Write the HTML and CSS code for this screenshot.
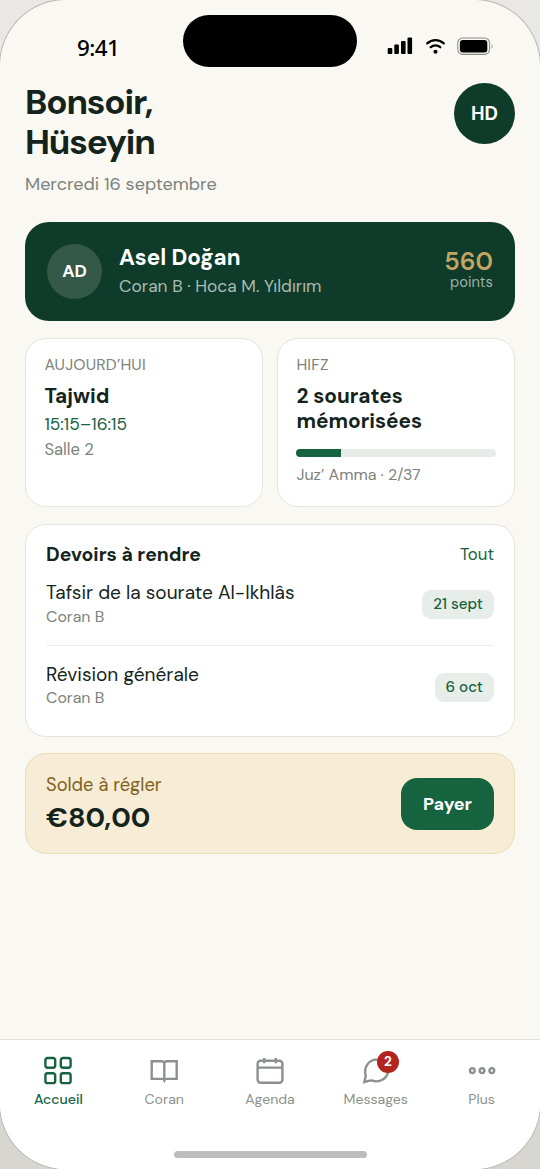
FILE: index.html
```html
<!DOCTYPE html>
<html lang="fr">
<head>
<meta charset="utf-8">
<meta name="viewport" content="width=device-width, initial-scale=1">
<title>Accueil</title>
<link rel="stylesheet" href="styles.css">
</head>
<body>
<div class="phone">
  <div class="status">
    <span class="clock">9:41</span>
    <span class="island"></span>
    <svg class="status-icons" width="108" height="20" viewBox="0 0 108 20">
      <rect x="0.7" y="11" width="4.6" height="6" rx="1"/>
      <rect x="7.3" y="7.4" width="4.6" height="9.6" rx="1"/>
      <rect x="14" y="4" width="4.6" height="13" rx="1"/>
      <rect x="20.5" y="0.4" width="4.6" height="16.6" rx="1"/>
      <g fill="none" stroke="#000" stroke-width="2.2" stroke-linecap="round">
        <path d="M40.2 6.4a12 12 0 0 1 16.6 0"/>
        <path d="M43.6 10.3a7.2 7.2 0 0 1 9.8 0"/>
      </g>
      <circle cx="48.5" cy="14.8" r="2"/>
      <rect x="70.8" y="1" width="31.7" height="16.4" rx="5" fill="none" stroke="#8f8c8c" stroke-width="1.1"/>
      <rect x="72.9" y="3.1" width="27.4" height="12.3" rx="3"/>
      <path d="M104.6 7v4.6c1.3-.8 1.3-3.8 0-4.6z" fill="#8f8c8c"/>
    </svg>
  </div>

  <main class="content">
    <header class="header">
      <div>
        <h1 class="greeting">Bonsoir,<br>Hüseyin</h1>
        <p class="date">Mercredi 16 septembre</p>
      </div>
      <div class="avatar">HD</div>
    </header>

    <section class="student">
      <div class="student-avatar">AD</div>
      <div class="student-info">
        <div class="student-name">Asel Doğan</div>
        <div class="student-class">Coran B · Hoca M. Yıldırım</div>
      </div>
      <div class="points">
        <div class="points-value">560</div>
        <div class="points-label">points</div>
      </div>
    </section>

    <div class="pair">
      <section class="card">
        <div class="label">AUJOURD’HUI</div>
        <div class="card-title">Tajwid</div>
        <div class="time">15:15–16:15</div>
        <div class="room">Salle 2</div>
      </section>
      <section class="card">
        <div class="label">HIFZ</div>
        <div class="card-title">2 sourates<br>mémorisées</div>
        <div class="progress"><div class="progress-fill"></div></div>
        <div class="juz">Juz’ Amma · 2/37</div>
      </section>
    </div>

    <section class="homework">
      <div class="hw-head">
        <h2 class="hw-title">Devoirs à rendre</h2>
        <span class="hw-all">Tout</span>
      </div>
      <div class="hw-row">
        <div>
          <div class="hw-name">Tafsir de la sourate Al-Ikhlâs</div>
          <div class="hw-class">Coran B</div>
        </div>
        <span class="chip">21 sept</span>
      </div>
      <div class="hw-row">
        <div>
          <div class="hw-name">Révision générale</div>
          <div class="hw-class">Coran B</div>
        </div>
        <span class="chip">6 oct</span>
      </div>
    </section>

    <section class="balance">
      <div>
        <div class="balance-label">Solde à régler</div>
        <div class="balance-amount">€80,00</div>
      </div>
      <button class="pay">Payer</button>
    </section>
  </main>

  <nav class="tabs">
    <div class="tab active">
      <svg class="icon" width="32" height="32" viewBox="0 0 32 32">
        <rect x="3.4" y="3" width="9.8" height="9.8" rx="2.2"/><rect x="18.8" y="3" width="9.8" height="9.8" rx="2.2"/>
        <rect x="3.4" y="18.3" width="9.8" height="9.8" rx="2.2"/><rect x="18.8" y="18.3" width="9.8" height="9.8" rx="2.2"/>
      </svg>
      <span>Accueil</span>
    </div>
    <div class="tab">
      <svg class="icon" width="32" height="32" viewBox="0 0 32 32">
        <path d="M3.7 6.3h10.2a2.4 2.4 0 0 1 2.4 1.8a2.4 2.4 0 0 1 2.4-1.8h10v17.6h-10.4a2.2 2.2 0 0 0-2 1.4a2.2 2.2 0 0 0-2-1.4H3.7zM16.3 8.1v17.2"/>
      </svg>
      <span>Coran</span>
    </div>
    <div class="tab">
      <svg class="icon" width="32" height="32" viewBox="0 0 32 32">
        <rect x="3.6" y="5.8" width="24.8" height="22" rx="3"/>
        <path d="M3.6 12.6h24.8M10.2 3v5.2M21.8 3v5.2"/>
      </svg>
      <span>Agenda</span>
    </div>
    <div class="tab">
      <svg class="icon" width="32" height="32" viewBox="0 0 32 32">
        <path d="M4.4 27L5.8 20.8C3.2 13 8.4 4.6 16.4 4.6C23 4.6 28 9.4 28 15.5C28 23.4 19.5 28.5 11.6 25.4C9.2 25.4 6.8 26.2 4.4 27Z"/>
      </svg>
      <span class="badge">2</span>
      <span>Messages</span>
    </div>
    <div class="tab">
      <svg class="icon" width="32" height="32" viewBox="0 0 32 32">
        <circle cx="6.3" cy="15.6" r="2.4"/><circle cx="16" cy="15.6" r="2.4"/><circle cx="25.8" cy="15.6" r="2.4"/>
      </svg>
      <span>Plus</span>
    </div>
    <div class="home-indicator"></div>
  </nav>
</div>
</body>
</html>
```

FILE: styles.css
```css
* { box-sizing: border-box; margin: 0; padding: 0; }

body {
  background: linear-gradient(#e9e8e4, #d6d5d0);
  font-family: "DM Sans", Inter, "Liberation Sans", sans-serif;
  font-variation-settings: "opsz" 14;
  color: #14241c;
}

.phone {
  width: 540px;
  height: 1169px;
  display: flex;
  flex-direction: column;
  overflow: hidden;
  background: #f9f8f2;
  border-radius: 66px;
  box-shadow: 0 0 0 1px #b9b8b4;
}

.status {
  position: relative;
  height: 82px;
  flex: none;
  display: flex;
  justify-content: space-between;
  padding: 37px 45px 0 77px;
}
.clock {
  margin-top: -1px;
  font: 500 22.4px/24px "Noto Sans", sans-serif;
  letter-spacing: -0.6px;
  color: #000;
}
.island {
  position: absolute;
  left: 183px;
  top: 15px;
  width: 174px;
  height: 51.5px;
  border-radius: 26px;
  background: #000;
}

.content { flex: 1; padding: 0 25px; }

.header { display: flex; justify-content: space-between; height: 140px; }
.greeting { font-size: 35px; line-height: 40px; font-weight: 680; letter-spacing: -1.15px; }
.date { margin-top: 10px; font-size: 18px; line-height: 24px; color: #7c827c; }
.avatar {
  width: 61px;
  height: 61px;
  margin-top: 1px;
  border-radius: 50%;
  background: #0e3b2a;
  color: #fff;
  font-size: 19px;
  font-weight: 700;
  line-height: 61px;
  text-align: center;
}

.student {
  height: 99px;
  display: flex;
  align-items: center;
  padding: 0 22px;
  border-radius: 24px;
  background: #0e3b2a;
  color: #fff;
}
.student-avatar {
  width: 55px;
  height: 55px;
  margin-right: 17px;
  border-radius: 50%;
  background: #345948;
  font-size: 17.4px;
  font-weight: 700;
  line-height: 55px;
  text-align: center;
}
.student-info { flex: 1; padding-bottom: 3px; }
.student-name { font-size: 22.4px; line-height: 28px; font-weight: 680; }
.student-class { margin-top: 3px; font-size: 17.35px; line-height: 22px; color: #abbbb2; }
.points { padding-bottom: 4px; text-align: right; }
.points-value { padding-top: 1px; font-size: 25px; line-height: 26px; font-weight: 640; color: #c4a561; }
.points-label { margin-top: -2px; font-size: 14.7px; line-height: 18px; color: #9fb1a8; }

.pair { display: grid; grid-template-columns: 1fr 1fr; gap: 14px; margin-top: 17px; }
.card {
  height: 169px;
  padding: 15.5px 18.4px 0;
  background: #fff;
  border: 1px solid #e6e5dc;
  border-radius: 21px;
}
.label { font-size: 15.8px; line-height: 20px; letter-spacing: 0.2px; color: #7c827c; }
.card-title { margin-top: 8px; font-size: 20.8px; line-height: 25px; font-weight: 680; }
.time { margin-top: 5.5px; font-size: 17.3px; line-height: 22px; color: #16633f; }
.room { margin-top: 3.5px; font-size: 16.6px; line-height: 22px; color: #7c827c; }
.progress { height: 8px; margin-top: 16px; border-radius: 4px; background: #e7ece8; overflow: hidden; }
.progress-fill { width: 22.5%; height: 100%; background: #16633f; }
.juz { margin-top: 7px; font-size: 16px; line-height: 22px; color: #7c827c; }

.homework {
  height: 213px;
  margin-top: 17px;
  padding: 18px 20px 0;
  background: #fff;
  border: 1px solid #e6e5dc;
  border-radius: 21px;
}
.hw-head { display: flex; justify-content: space-between; line-height: 24px; }
.hw-title { font-size: 19.4px; font-weight: 670; }
.hw-all { margin-top: -1px; font-size: 16.8px; color: #16633f; }
.hw-row { display: flex; justify-content: space-between; padding: 14px 0 18px; }
.hw-row + .hw-row { padding-top: 17px; border-top: 1px solid #ecece7; }
.hw-name { font-size: 19.1px; line-height: 24px; }
.hw-class { margin-top: 2px; font-size: 15.9px; line-height: 20px; color: #7c827c; }
.hw-row + .hw-row .hw-class { margin-top: 1px; }
.chip {
  height: 29px;
  margin-top: 9px;
  padding: 0 11px;
  border-radius: 9px;
  background: #e7eee9;
  color: #16633f;
  font-size: 15.2px;
  font-weight: 500;
  line-height: 29px;
}
.hw-row + .hw-row .chip { margin-top: 10px; }

.balance {
  height: 101px;
  margin-top: 16px;
  padding: 19px 20px 0;
  display: flex;
  justify-content: space-between;
  background: #f7ecd6;
  border: 1px solid #ebdcb6;
  border-radius: 21px;
}
.balance-label { font-size: 18.35px; line-height: 24px; color: #80611b; }
.balance-amount { margin-top: 4px; font-size: 27.8px; line-height: 34px; font-weight: 660; }
.pay {
  width: 93px;
  height: 52px;
  margin-top: 5px;
  border: 0;
  border-radius: 16px;
  background: #16633f;
  color: #fff;
  font: 700 18px/52px "DM Sans", Inter, sans-serif;
}

.tabs {
  position: relative;
  height: 130px;
  flex: none;
  display: grid;
  grid-template-columns: repeat(5, 1fr);
  padding: 15px 5.5px 0;
  background: #fff;
  border-top: 1px solid #e0dfd7;
}
.tab {
  position: relative;
  display: flex;
  flex-direction: column;
  align-items: center;
  color: #8b918c;
  font-size: 14.1px;
  font-weight: 450;
  line-height: 20px;
}
.active { color: #16633f; font-weight: 500; }
.icon { margin-bottom: 2px; fill: none; stroke: currentColor; stroke-width: 2.4; }
.badge {
  position: absolute;
  left: 54px;
  top: -4px;
  width: 22px;
  height: 22px;
  border-radius: 50%;
  background: #b2241d;
  color: #fff;
  font-size: 13.5px;
  font-weight: 800;
  line-height: 22px;
  text-align: center;
}
.home-indicator {
  position: absolute;
  left: 174px;
  bottom: 11px;
  width: 193px;
  height: 7px;
  border-radius: 4px;
  background: #bdbdbd;
}
```
